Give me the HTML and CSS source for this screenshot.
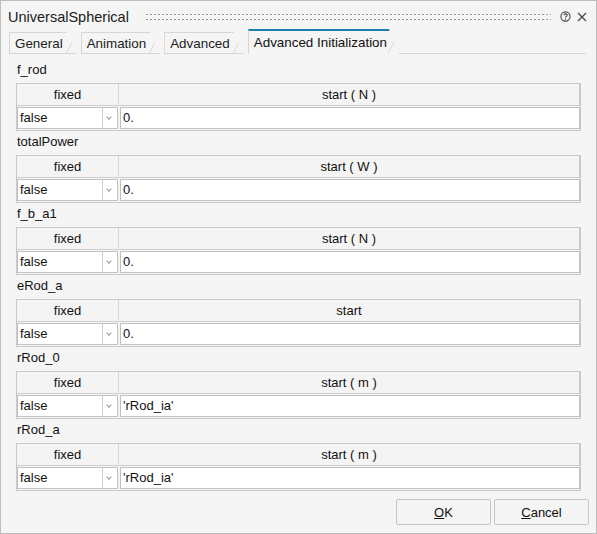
FILE: index.html
```html
<!DOCTYPE html>
<html>
<head>
<meta charset="utf-8">
<link rel="stylesheet" href="styles.css">
</head>
<body>
<div class="dialog">
  <div class="titlebar">
    <span class="title">UniversalSpherical</span>
    <span class="grip"></span>
    <svg class="help" width="11" height="11" viewBox="0 0 11 11"><circle cx="5.5" cy="5.5" r="4.6" fill="none" stroke="#444" stroke-width="1.1"/><path d="M3.9 4.3 Q3.9 2.9 5.5 2.9 Q7.1 2.9 7.1 4.2 Q7.1 5 6.1 5.4 Q5.5 5.7 5.5 6.5" fill="none" stroke="#444" stroke-width="1.1"/><circle cx="5.5" cy="8" r="0.7" fill="#444"/></svg>
    <svg class="close" width="10" height="10" viewBox="0 0 10 10"><path d="M1 1 L9 9 M9 1 L1 9" stroke="#444" stroke-width="1.2"/></svg>
  </div>
  <div class="tabs">
    <div class="tab">General</div>
    <div class="tab">Animation</div>
    <div class="tab">Advanced</div>
    <div class="tab active">Advanced Initialization</div>
    <div class="tabline"></div>
  </div>
  <div class="content">
    <div class="section">
      <div class="label">f_rod</div>
      <div class="grid">
        <div class="hcell">fixed</div><div class="hcell last">start ( N )</div>
        <div class="dcell sel"><span class="val">false</span><span class="arrow"></span></div><div class="dcell inp">0.</div>
      </div>
    </div>
    <div class="section">
      <div class="label">totalPower</div>
      <div class="grid">
        <div class="hcell">fixed</div><div class="hcell last">start ( W )</div>
        <div class="dcell sel"><span class="val">false</span><span class="arrow"></span></div><div class="dcell inp">0.</div>
      </div>
    </div>
    <div class="section">
      <div class="label">f_b_a1</div>
      <div class="grid">
        <div class="hcell">fixed</div><div class="hcell last">start ( N )</div>
        <div class="dcell sel"><span class="val">false</span><span class="arrow"></span></div><div class="dcell inp">0.</div>
      </div>
    </div>
    <div class="section">
      <div class="label">eRod_a</div>
      <div class="grid">
        <div class="hcell">fixed</div><div class="hcell last">start</div>
        <div class="dcell sel"><span class="val">false</span><span class="arrow"></span></div><div class="dcell inp">0.</div>
      </div>
    </div>
    <div class="section">
      <div class="label">rRod_0</div>
      <div class="grid">
        <div class="hcell">fixed</div><div class="hcell last">start ( m )</div>
        <div class="dcell sel"><span class="val">false</span><span class="arrow"></span></div><div class="dcell inp">'rRod_ia'</div>
      </div>
    </div>
    <div class="section">
      <div class="label">rRod_a</div>
      <div class="grid">
        <div class="hcell">fixed</div><div class="hcell last">start ( m )</div>
        <div class="dcell sel"><span class="val">false</span><span class="arrow"></span></div><div class="dcell inp">'rRod_ia'</div>
      </div>
    </div>
  </div>
  <div class="buttons">
    <button class="btn"><u>O</u>K</button>
    <button class="btn"><u>C</u>ancel</button>
  </div>
</div>
</body>
</html>
```
FILE: styles.css
```css
html, body {
  margin: 0;
  padding: 0;
  background: #f4f4f4;
}
body {
  font-family: "Liberation Sans", Arial, sans-serif;
  font-size: 13px;
  color: #111;
}
.dialog {
  width: 597px;
  height: 534px;
  box-sizing: border-box;
  border: 1px solid #bdbdbd;
  background: #f5f5f5;
  display: flex;
  flex-direction: column;
}
.titlebar {
  height: 29px;
  display: flex;
  align-items: center;
  padding: 0 9px 0 7px;
}
.title {
  font-size: 14.5px;
  color: #1a1a1a;
  margin-top: 3px;
}
.grip {
  flex: 1;
  height: 10px;
  margin: 2px 9px 0 16px;
  background-image: radial-gradient(circle, #9a9a9a 0.8px, transparent 1.1px);
  background-size: 4px 5px;
  background-position: 0 0;
}
.help {
  margin-right: 6px;
  margin-top: 2px;
}
.close {
  margin-top: 2px;
}
.tabs {
  height: 24px;
  display: flex;
  align-items: flex-end;
  padding-left: 8px;
  padding-right: 10px;
}
.tab {
  position: relative;
  height: 20px;
  line-height: 21px;
  padding: 0 14px 0 5px;
  margin-right: 4px;
  border-top: 1px solid #d6d6d6;
  border-left: 1px solid #d6d6d6;
  border-bottom: 1px solid #d6d6d6;
  color: #222;
  font-size: 13.4px;
  background: #f5f5f5;
  clip-path: polygon(0 0, calc(100% - 10px) 0, 100% 100%, 0 100%);
}
.tab::after {
  content: "";
  position: absolute;
  top: -1px;
  right: 0;
  width: 11px;
  height: 22px;
  background: linear-gradient(to bottom right, transparent calc(50% - 0.7px), #d0d0d0 50%, transparent calc(50% + 0.7px));
}
.tab.active {
  height: 22px;
  line-height: 23px;
  border-top: 2px solid #1c7fb0;
  border-bottom: 1px solid transparent;
  color: #111;
  margin-right: 0;
  padding-right: 12px;
}
.tab.active::after {
  top: 0;
  height: 23px;
}
.tabline {
  flex: 1;
  border-bottom: 1px solid #d6d6d6;
  margin-left: -1px;
}
.content {
  padding: 5px 15px 0 15px;
  display: flex;
  flex-direction: column;
}
.section {
  display: flex;
  flex-direction: column;
}
.label {
  height: 24px;
  line-height: 22px;
  padding-left: 1px;
  font-size: 13px;
}
.grid {
  display: grid;
  grid-template-columns: 102px 1fr;
  border: 1px solid #c9c9c9;
  height: 46px;
  background: #f4f4f4;
}
.hcell {
  height: 21px;
  line-height: 21px;
  text-align: center;
  border-right: 1px solid #d8d8d8;
  border-bottom: 1px solid #cfcfcf;
  font-size: 13px;
}
.hcell.last {
  border-right: 1px solid #c9c9c9;
}
.dcell {
  height: 20px;
  line-height: 19px;
  background: #fff;
  border: 1px solid #c2c2c2;
  margin: 1px;
  font-size: 13px;
}
.sel {
  display: flex;
  margin-left: 0;
}
.val {
  flex: 1;
  padding-left: 2px;
}
.arrow {
  width: 14px;
  border-left: 1px solid #d0d0d0;
  position: relative;
}
.arrow::after {
  content: "";
  position: absolute;
  left: 4px;
  top: 7px;
  width: 3px;
  height: 3px;
  border-right: 1.3px solid #9a9a9a;
  border-bottom: 1.3px solid #9a9a9a;
  transform: rotate(45deg);
}
.inp {
  padding-left: 2px;
  margin-right: 0;
}
.buttons {
  display: flex;
  justify-content: flex-end;
  gap: 3px;
  padding: 8px 7px 0 0;
}
.btn {
  width: 95px;
  height: 26px;
  font-family: inherit;
  font-size: 13px;
  background: #f4f4f4;
  border: 1px solid #c6c6c6;
  border-radius: 2px;
  color: #111;
}
.btn u {
  text-decoration-thickness: 1px;
}
```
